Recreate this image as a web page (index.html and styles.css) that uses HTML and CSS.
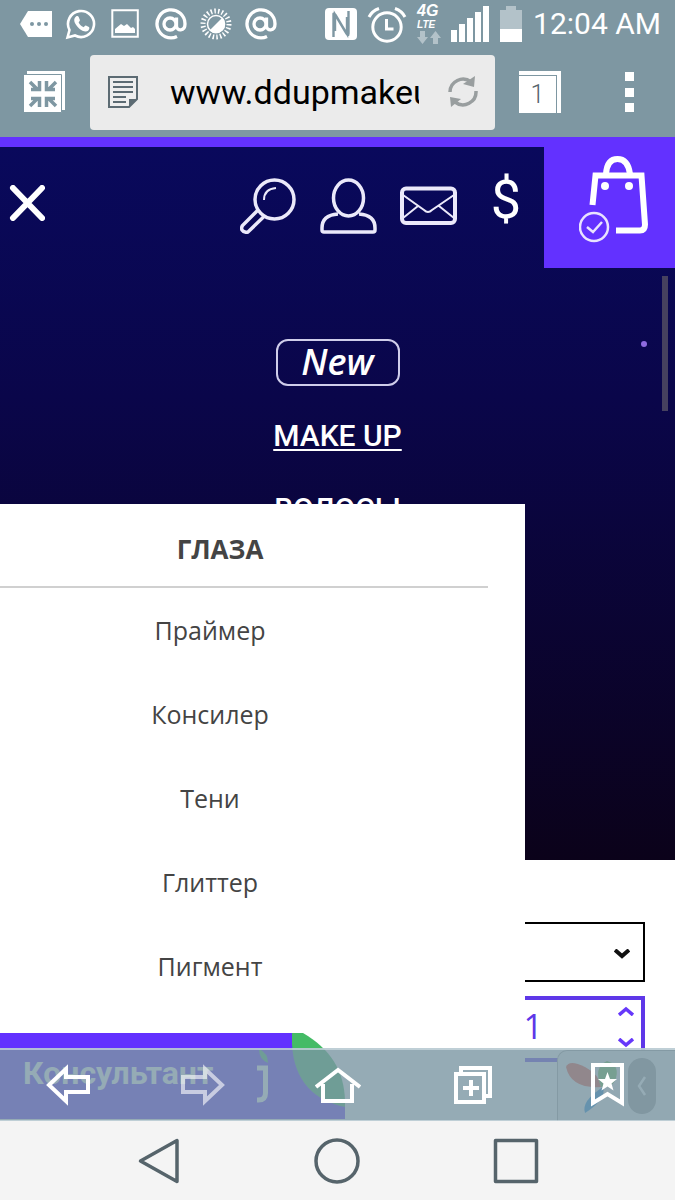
FILE: index.html
```html
<!DOCTYPE html>
<html lang="ru">
<head>
<meta charset="utf-8">
<meta name="viewport" content="width=device-width, initial-scale=1">
<title>DDup Makeup</title>
<link rel="stylesheet" href="styles.css">
</head>
<body>
<header class="chrome">
  <div class="status">
    <div class="status-icons">
      <svg width="32" height="32" viewBox="0 0 32 32"><path fill="#fff" d="M0 16 8 3h24v26H8z"/><g fill="#7e97a2"><circle cx="12" cy="16" r="2"/><circle cx="19" cy="16" r="2"/><circle cx="26" cy="16" r="2"/></g></svg>
      <svg width="32" height="32" viewBox="0 0 32 32"><path fill="none" stroke="#fff" stroke-width="2.6" d="M2.500 29.500 4.500 22A13 13 0 1 1 10 27.500z"/><path fill="#fff" d="M11 8.500c1-.8 2.300-.6 2.700.4l1.200 3c.3.900-1.500 2-1.200 2.700 1 2 2.500 3.500 4.600 4.500.8.300 1.700-2 2.600-1.600l3 1.600c1 .6.300 2.800-.8 3.600-2.300 1.600-6 .3-9-2.300s-5-6-4.900-8.400c.1-1.400.7-2.600 1.800-3.500z"/></svg>
      <svg width="32" height="32" viewBox="0 0 32 32"><path fill="none" stroke="#fff" stroke-width="2" d="M2.300 2.300h25.500v26.500H2.300z"/><path fill="#fff" d="M5 25v-4l6-5 3 2 3-2 4 4 2-1 2 2v4z"/></svg>
      <svg width="32" height="32" viewBox="0 0 32 32"><g fill="none" stroke="#fff" stroke-width="3.300"><circle cx="15" cy="16" r="6"/><path d="M21.500 9.500V18c0 5.500 8.500 5.500 8.500-2A14 14 0 1 0 22 28.500"/></g></svg>
      <svg width="32" height="32" viewBox="0 0 32 32"><circle cx="16" cy="16" r="13" fill="none" stroke="#fff" stroke-width="5" stroke-dasharray="1.500 2.200"/><circle cx="16" cy="16" r="8.500" fill="#7e97a2" stroke="#fff" stroke-width="1.500"/><path fill="#fff" d="M22.500 9.500a9 9 0 0 1-13 13z"/></svg>
      <svg width="32" height="32" viewBox="0 0 32 32"><g fill="none" stroke="#fff" stroke-width="3.300"><circle cx="15" cy="16" r="6"/><path d="M21.500 9.500V18c0 5.500 8.500 5.500 8.500-2A14 14 0 1 0 22 28.500"/></g></svg>
    </div>
    <div class="status-info">
      <svg width="32" height="32" viewBox="0 0 32 32"><rect width="32" height="32" rx="4" fill="#fff"/><path fill="none" stroke="#7e97a2" stroke-width="2.400" d="M8.500 29V6.500Q8.500 4 10.500 7L22 26V9M23.500 3v22.500q0 3-2 0L10 6.500V23" /></svg>
      <svg width="40" height="38" viewBox="0 0 40 38"><g fill="none" stroke="#fff" stroke-width="3"><circle cx="20" cy="22" r="14.200"/><path d="M19.500 14v10h7M2 12Q5 6 12 3.500M38 12Q35 6 28 3.500"/></g></svg>
      <div class="network"><b>4G</b><b class="lte">LTE</b>
        <svg width="24" height="13" viewBox="0 0 24 13"><path fill="#b3c2c9" d="M3 0h5v6h3l-5.500 7L0 6h3zM16 13h5V7h3l-5.500-7L13 7h3z"/></svg></div>
      <svg width="38" height="36" viewBox="0 0 38 36"><path fill="#fff" d="M0 24h6v12H0zM8 18h6v18H8zM16 12h6v24h-6zM24 6h6v30h-6zM32 0h6v36h-6z"/></svg>
      <svg width="24" height="36" viewBox="0 0 24 36"><path fill="#b3c2c9" d="M7 0h10v4h6v20H1V4h6z"/><path fill="#fff" d="M1 23h22v13H1z"/></svg>
      <time>12:04 AM</time>
    </div>
  </div>
  <div class="address-bar">
    <button class="plain" aria-label="Exit full screen"><svg width="42" height="42" viewBox="0 0 42 42"><path fill="#fff" d="M3 0h38v39H3z"/><path fill="#fff" stroke="#7e97a2" d="M-.500 3.500h38v38h-38z"/><g fill="none" stroke="#7e97a2" stroke-width="3.500"><path d="m6 11 8 8M32 11l-8 8M6 35l8-8M32 35l-8-8M7 18.500h8.500V10M31 18.500h-8.500V10M7 27.500h8.500V36M31 27.500h-8.500V36"/></g></svg></button>
    <div class="url-box">
      <svg width="30" height="32" viewBox="0 0 30 32"><path fill="#eee" stroke="#5c6b73" stroke-width="2" d="M1 1h28v22l-8 8H1z"/><path stroke="#5c6b73" stroke-width="2" d="M5 6h20M5 11h20M5 16h20M5 21h13M5 26h13"/><path fill="#5c6b73" d="M21 31v-8h8z"/></svg>
      <input class="url" type="text" aria-label="Address" value="www.ddupmakeup.com">
      <button class="plain" aria-label="Reload"><svg width="32" height="32" viewBox="0 0 32 32"><g fill="none" stroke="#999e9f" stroke-width="3.500"><path d="M3 16A13 13 0 0 1 24 6M29 15A13 13 0 0 1 8 26"/></g><path fill="#999e9f" d="m28 0-1 11-11-3zM4 31l-1-10 11 2z"/></svg></button>
    </div>
    <button class="tabs-btn"><span>1</span></button>
    <button class="plain more" aria-label="Menu"><svg width="9" height="41" viewBox="0 0 9 41"><path fill="#fff" d="M0 0h9v9H0zM0 16h9v9H0zM0 31h9v9H0z"/></svg></button>
  </div>
</header>

<main class="page">
  <div class="hero">
    <div class="shop-bar">
      <button class="plain close" aria-label="Закрыть"><svg width="36" height="36" viewBox="0 0 36 36"><path stroke="#fff" stroke-width="6" stroke-linecap="round" d="m4 3 29 30M33 3 4 33"/></svg></button>
      <nav class="shop-icons" aria-label="Магазин">
        <a href="#search" aria-label="Поиск"><svg width="57" height="56" viewBox="0 0 57 56"><g fill="none" stroke="#ebe9fa" stroke-width="3.500"><circle cx="34.500" cy="21.500" r="19.500"/><path d="M18 32 2.500 47.500Q1 50 2 52q2 3 6 2L24.500 38"/><path stroke-width="2" d="M24 22q0-11 12-12"/></g></svg></a>
        <a href="#account" aria-label="Профиль"><svg width="57" height="56" viewBox="0 0 57 56"><g fill="none" stroke="#ebe9fa" stroke-width="3.500"><ellipse cx="28.500" cy="20" rx="15" ry="18"/><path d="M18 36Q2 37 2 50v2q0 2 2 2h49q2 0 2-2v-2q0-13-16-14"/></g></svg></a>
        <a href="#mail" aria-label="Почта"><svg width="57" height="40" viewBox="0 0 57 40"><g fill="none" stroke="#ebe9fa"><rect x="2" y="2.500" width="53" height="34.500" rx="4" stroke-width="4"/><path stroke-width="2" d="m3 9 21 15q4 4 8 0l22-15M3 32l15-12M54 32 39 20"/></g></svg></a>
        <button class="currency">$</button>
      </nav>
      <a class="cart" href="#cart" aria-label="Корзина"><svg width="70" height="88" viewBox="0 0 70 88"><g fill="none" stroke="#fff" stroke-width="6"><path d="M13.500 50 16.500 20.500h46l3.500 49q0 6-5 6H37"/><path d="M27 19Q28 4 38.500 4T51 19"/></g><circle cx="26" cy="31" r="4" fill="#fff"/><circle cx="50" cy="31" r="4" fill="#fff"/><g fill="none" stroke="#e9e2ff" stroke-width="2.500"><circle cx="15" cy="72" r="14"/><path d="m8 72 6 5 9-10"/></g></svg></a>
    </div>
    <ul class="main-menu">
      <li><a class="badge-new" href="#new">New</a></li>
      <li><a class="current" href="#makeup">MAKE UP</a></li>
      <li><a href="#hair">ВОЛОСЫ</a></li>
    </ul>
    <span class="dot"></span>
    <span class="scroll-thumb"></span>
  </div>

  <form class="order">
    <select aria-label="Вариант"><option></option></select>
    <svg class="select-arrow" width="16" height="10" viewBox="0 0 16 10"><path fill="none" stroke="#111" stroke-width="4" d="m1 1 7 6 7-6"/></svg>
    <div class="quantity">
      <input type="number" value="1" aria-label="Количество">
      <div class="steps">
        <button type="button" class="plain" aria-label="Больше"><svg width="16" height="10" viewBox="0 0 16 10"><path fill="none" stroke="#6638fa" stroke-width="3.500" d="m1 9 7-6 7 6"/></svg></button>
        <button type="button" class="plain" aria-label="Меньше"><svg width="16" height="10" viewBox="0 0 16 10"><path fill="none" stroke="#6638fa" stroke-width="3.500" d="m1 1 7 6 7-6"/></svg></button>
      </div>
    </div>
  </form>

  <section class="submenu">
    <h2>ГЛАЗА</h2>
    <ul>
      <li><a href="#primer">Праймер</a></li>
      <li><a href="#concealer">Консилер</a></li>
      <li><a href="#shadow">Тени</a></li>
      <li><a href="#glitter">Глиттер</a></li>
      <li><a href="#pigment">Пигмент</a></li>
    </ul>
  </section>

  <div class="chat">
    <div class="chat-label">Консультант
      <svg width="18" height="56" viewBox="0 0 18 56"><path fill="#44bb66" d="M2 0q9 4 9 14Q2 10 2 0z"/><path fill="none" stroke="#fff" stroke-width="5" d="M0 19h8.500v25q0 7-7 7H0"/></svg></div>
    <svg width="53" height="86" viewBox="0 0 53 86"><path fill="#6331ff" d="M0 10 53 72v14H0z"/><path fill="#44bb66" d="M0 0h11C40 17 54 40 53 74 20 67-2 45 0 0z"/></svg>
  </div>

  <div class="share">
    <svg width="72" height="64" viewBox="0 0 72 64"><path fill="#e84b35" d="M1 8Q4 0 20 8q14 7 16 20Q6 30 1 8z"/><path fill="#6cc04a" d="M36 28Q28 8 42 2q14 4 8 20-4 7-14 6z"/><path fill="#1684d8" d="M38 28Q42 40 20 54 16 42 38 28z"/></svg>
    <button class="share-toggle" aria-label="Развернуть"><svg width="10" height="20" viewBox="0 0 10 20"><path fill="none" stroke="#fff" stroke-width="2.500" d="M8 1 2 10l6 9"/></svg></button>
  </div>

  <nav class="toolbar" aria-label="Браузер">
    <button class="plain" aria-label="Назад"><svg width="44" height="42" viewBox="0 0 44 42"><path fill="none" stroke="#fff" stroke-width="4" d="M3 21 20 5v8h22v15H20v9z"/></svg></button>
    <button class="plain faded" aria-label="Вперёд"><svg width="44" height="42" viewBox="0 0 44 42"><path fill="none" stroke="#fff" stroke-width="4" d="M41 21 24 5v8H2v15h22v9z"/></svg></button>
    <button class="plain" aria-label="Домой"><svg width="46" height="38" viewBox="0 0 46 38"><path fill="none" stroke="#fff" stroke-width="4" d="M1 21 23 4l22 17M8 18v17h29V18"/></svg></button>
    <button class="plain" aria-label="Новая вкладка"><svg width="38" height="38" viewBox="0 0 38 38"><path fill="none" stroke="#fff" stroke-width="4" d="M2 8h28v28H2zM7 7V2h29v28h-5M9 22h16M17 14v16"/></svg></button>
    <button class="plain" aria-label="Закладки"><svg width="34" height="44" viewBox="0 0 34 44"><path fill="none" stroke="#fff" stroke-width="4" d="M2 2h29v38L16.500 31 2 40z"/><path fill="#fff" d="m16.500 9 2.500 7h7l-5.500 4.500 2 7-6-4-6 4 2-7L7 16h7z"/></svg></button>
  </nav>
</main>

<nav class="system" aria-label="System">
  <button class="plain" aria-label="Back"><svg width="42" height="46" viewBox="0 0 42 46"><path fill="none" stroke="#56646b" stroke-width="3.500" stroke-linejoin="round" d="M2.500 23 39 2.500v41z"/></svg></button>
  <button class="plain" aria-label="Home"><svg width="46" height="46" viewBox="0 0 46 46"><circle cx="23" cy="23" r="21" fill="none" stroke="#56646b" stroke-width="3.500"/></svg></button>
  <button class="plain" aria-label="Recent"><svg width="46" height="46" viewBox="0 0 46 46"><path fill="none" stroke="#56646b" stroke-width="3.500" stroke-linejoin="round" d="M2.500 2.500h41v41h-41z"/></svg></button>
</nav>
</body>
</html>
```
FILE: styles.css
```css
* { box-sizing: border-box; }
body {
  margin: 0;
  min-height: 100vh;
  display: flex;
  flex-direction: column;
  background: #fff;
  font-family: "Open Sans", "Noto Sans", sans-serif;
}
svg { display: block; flex: none; }
a { color: inherit; text-decoration: none; }
ul { list-style: none; margin: 0; padding: 0; }
button { font: inherit; cursor: pointer; }
.plain { background: none; border: 0; padding: 0; display: flex; align-items: center; justify-content: center; }

/* Browser chrome */
.chrome { background: #7e97a2; font-family: Roboto, sans-serif; }
.status { display: flex; justify-content: space-between; height: 47px; padding: 0 14px 0 20px; color: #fff; }
.status-icons { display: flex; align-items: center; gap: 13px; }
.status-info { display: flex; align-items: center; gap: 10px; font-size: 30px; }
.network { width: 24px; font-size: 16px; line-height: 16px; font-style: italic; font-family: "Liberation Sans", sans-serif; }
.network b { display: block; }
.network .lte { font-size: 10px; line-height: 12px; }
.address-bar { display: flex; align-items: center; height: 90px; padding: 0 41px 0 24px; }
.url-box { flex: 1; min-width: 0; height: 75px; margin: 0 24px; padding: 0 16px 0 18px; display: flex; align-items: center; background: #ebebeb; border-radius: 4px; }
.url { flex: 1; min-width: 0; height: 56px; margin: 0 28px 0 32px; padding: 0; border: 0; background: none; color: #000; font: 34px Roboto, sans-serif; }
.tabs-btn { width: 42px; height: 42px; padding: 4px 4px 0 0; border: 0; background: #fff; color: #56646b; font-size: 25px; font-weight: 300; }
.tabs-btn span { display: block; width: 38px; height: 38px; line-height: 38px; border: solid #7e97a2; border-width: 1px 1px 0 0; }
.more { margin-left: 64px; }

/* Shop page */
.page { position: relative; flex: 1; overflow: hidden; }
.hero { position: relative; height: 723px; border-top: 10px solid #6331ff; background: linear-gradient(#09095c, #0a064a 35%, #0b021a); color: #fff; }
.shop-bar { display: flex; align-items: center; height: 121px; padding-left: 9px; }
.close { margin-bottom: 10px; }
.shop-icons { flex: 1; display: flex; justify-content: flex-end; align-items: center; gap: 23px; padding: 0 22px 4px 0; }
.currency { width: 32px; margin-left: 10px; padding: 0 0 12px; border: 0; background: none; color: #fff; font: 54px/60px Roboto, sans-serif; }
.cart { width: 131px; height: 131px; margin-top: -10px; padding: 18px 0 0 35px; background: #6331ff; }
.main-menu { padding-top: 58px; font: 500 30px Roboto, sans-serif; text-align: center; }
.main-menu li { display: flex; justify-content: center; align-items: center; height: 73px; }
.badge-new { width: 124px; height: 47px; border: 2px solid #cfcdea; border-radius: 12px; font: italic 600 36px/41px "Open Sans", sans-serif; }
.current { text-decoration: underline; text-decoration-thickness: 2px; text-underline-offset: 3px; }
.dot { position: absolute; right: 28px; top: 194px; width: 6px; height: 6px; border-radius: 50%; background: #8e6be0; }
.scroll-thumb { position: absolute; right: 7px; top: 129px; width: 6px; height: 135px; background: #46415f; }

/* Order form */
.order { position: relative; padding: 62px 30px 0; }
.order select { display: block; width: 100%; height: 60px; border: 2px solid #000; border-radius: 0; background: #fff; appearance: none; }
.select-arrow { position: absolute; right: 45px; top: 89px; pointer-events: none; }
.quantity { display: flex; height: 66px; margin-top: 14px; padding-right: 7px; border: 4px solid #5e37e8; }
.quantity input { flex: 1; min-width: 0; padding: 0 75px 6px 0; border: 0; background: none; color: #5e37e8; font: 34px "Open Sans", sans-serif; text-align: right; appearance: textfield; }
.quantity input::-webkit-inner-spin-button { appearance: none; }
.steps { display: flex; flex-direction: column; justify-content: space-between; padding: 6px 0 10px; }

/* Category panel */
.submenu { position: absolute; left: 0; top: 367px; bottom: 0; width: 525px; background: #fff; color: #444; }
.submenu h2 { width: 488px; height: 84px; margin: 0; padding-right: 48px; border-bottom: 2px solid #d0d0d0; font-size: 26px; line-height: 90px; text-align: center; }
.submenu ul { padding-right: 105px; font-size: 25px; line-height: 84px; text-align: center; }

/* Floating widgets */
.chat { position: absolute; left: 0; bottom: 2px; display: flex; }
.chat-label { display: flex; justify-content: space-between; width: 292px; height: 86px; padding: 16px 17px 0 23px; background: #6331ff; color: #fff; font: 700 32px/48px Roboto, sans-serif; }
.share { position: absolute; right: 0; bottom: 0; display: flex; width: 118px; height: 71px; padding: 8px 0 0 7px; background: #f0f0f0; border: solid #aaa; border-width: 1px 0 0 1px; border-radius: 10px 0 0; }
.share-toggle { position: absolute; left: 70px; top: 7px; width: 28px; height: 56px; padding: 0 9px; border: 0; border-radius: 14px; background: #999; }

.toolbar { position: absolute; left: 0; right: 0; bottom: 0; display: grid; grid-template-columns: repeat(5, 1fr); height: 73px; background: rgba(122, 150, 162, .8); border: solid rgba(220, 232, 236, .6); border-width: 2px 0 1px; }
.faded { opacity: .6; }
.system { display: grid; grid-template-columns: repeat(3, 1fr); height: 79px; padding: 0 70px; background: #f4f4f4; }
```
